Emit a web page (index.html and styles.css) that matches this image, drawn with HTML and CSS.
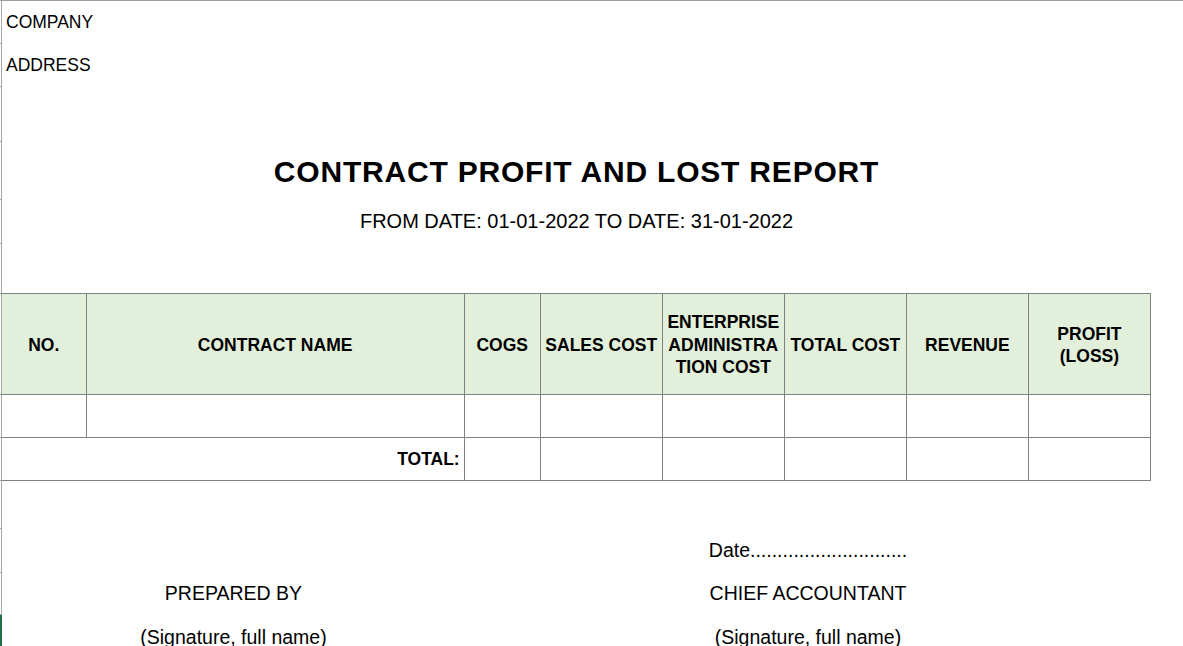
FILE: index.html
```html
<!DOCTYPE html>
<html lang="en">
<head>
    <meta charset="UTF-8">
    <meta name="viewport" content="width=device-width, initial-scale=1.0">
    <title>Contract Profit and Lost Report</title>
    <link rel="stylesheet" href="styles.css">
</head>
<body>
<div class="top-line"></div>

<div class="page">
    <!-- Row header strip -->
    <div class="gutter">
        <div class="tick h43"></div>
        <div class="tick h43"></div>
        <div class="tick h55"></div>
        <div class="tick h58"></div>
        <div class="tick h44"></div>
        <div class="tick h50"></div>
        <div class="tick h101"></div>
        <div class="tick h43"></div>
        <div class="tick h43"></div>
        <div class="tick h48"></div>
        <div class="tick h44"></div>
        <div class="tick h42"></div>
        <div class="tick active"></div>
    </div>

    <!-- Sheet -->
    <div class="sheet">
        <div class="row h43 company">COMPANY</div>
        <div class="row h43 company">ADDRESS</div>
        <div class="row h55"></div>
        <div class="row h58 title">CONTRACT PROFIT AND LOST REPORT</div>
        <div class="row h44 period">FROM DATE: 01-01-2022 TO DATE: 31-01-2022</div>
        <div class="row h49"></div>

        <table class="report">
            <colgroup>
                <col class="c-no">
                <col class="c-name">
                <col class="c-cogs">
                <col class="c-cost">
                <col class="c-cost">
                <col class="c-cost">
                <col class="c-cost">
                <col class="c-cost">
            </colgroup>
            <thead>
                <tr>
                    <th>NO.</th>
                    <th>CONTRACT NAME</th>
                    <th>COGS</th>
                    <th>SALES COST</th>
                    <th class="wrap">ENTERPRISE ADMINISTRATION COST</th>
                    <th>TOTAL COST</th>
                    <th>REVENUE</th>
                    <th>PROFIT<br>(LOSS)</th>
                </tr>
            </thead>
            <tbody>
                <tr>
                    <td></td><td></td><td></td><td></td><td></td><td></td><td></td><td></td>
                </tr>
                <tr class="total">
                    <td colspan="2">TOTAL:</td>
                    <td></td><td></td><td></td><td></td><td></td><td></td>
                </tr>
            </tbody>
        </table>

        <div class="row h48"></div>

        <div class="signs">
            <div></div>
            <div>Date.............................</div>
            <div>PREPARED BY</div>
            <div>CHIEF ACCOUNTANT</div>
            <div>(Signature, full name)</div>
            <div>(Signature, full name)</div>
        </div>
    </div>
</div>
</body>
</html>
```

FILE: styles.css
```css
/* General Reset */
body, div, table {
    margin: 0;
    padding: 0;
    box-sizing: border-box;
}

body {
    font-family: 'Liberation Sans', Arial, sans-serif;
    background: #fff;
    color: #000;
    overflow: hidden;
}

.top-line {
    height: 1px;
    background: #9e9e9e;
}

.page {
    display: flex;
}

/* Row header strip on the left */
.gutter {
    width: 2px;
    flex-shrink: 0;
    border-right: 1px solid #a6a6a6;
}

.tick {
    border-bottom: 1px solid #9e9e9e;
    box-sizing: border-box;
}

.tick.active {
    height: 60px;
    border: none;
    background: #1e7145;
    width: 2px;
}

.h42 { height: 42px; }
.h43 { height: 43px; }
.h44 { height: 44px; }
.h48 { height: 48px; }
.h49 { height: 49px; }
.h50 { height: 50px; }
.h55 { height: 55px; }
.h58 { height: 58px; }
.h101 { height: 101px; }

/* Sheet rows */
.sheet {
    width: 1149px;
    flex-shrink: 0;
}

.row {
    display: flex;
    align-items: center;
}

.company {
    font-size: 17.5px;
    padding-left: 4px;
}

.title {
    justify-content: center;
    font-size: 30px;
    font-weight: bold;
    letter-spacing: 0.8px;
    padding-top: 1px;
}

.period {
    justify-content: center;
    font-size: 20px;
    padding-bottom: 2px;
}

/* Report table */
.report {
    border-collapse: collapse;
    table-layout: fixed;
    width: 1149px;
}

.c-no { width: 84px; }
.c-name { width: 378px; }
.c-cogs { width: 76px; }
.c-cost { width: 122px; }

.report th,
.report td {
    border: 1px solid #808080;
    padding: 0 2px;
    font-size: 17.5px;
    font-weight: bold;
    line-height: 22.5px;
    text-align: center;
    vertical-align: middle;
}

.report tr > :first-child {
    border-left: none;
}

.report thead tr {
    height: 101px;
}

.report th {
    background: #e2efda;
    padding-top: 2px;
}

.report th.wrap {
    overflow-wrap: anywhere;
}

.report tbody tr {
    height: 43px;
}

.report .total td:first-child {
    text-align: right;
    padding-right: 4px;
}

/* Signatures */
.signs {
    display: grid;
    grid-template-columns: 463px 686px;
    grid-template-rows: 44px 42px 44px;
    font-size: 19.5px;
}

.signs div {
    display: flex;
    align-items: center;
    justify-content: center;
}

.signs div:nth-child(-n+4) {
    padding-bottom: 2px;
}
```
